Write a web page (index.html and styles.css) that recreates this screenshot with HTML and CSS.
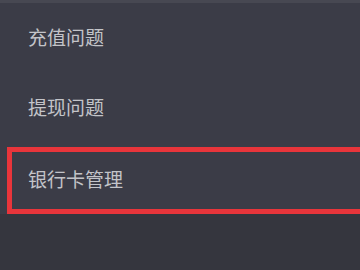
FILE: index.html
```html
<!DOCTYPE html>
<html lang="zh">
<head>
<meta charset="utf-8">
<link rel="stylesheet" href="styles.css">
</head>
<body>
<div class="topbar"></div>
<div class="list">
  <div class="row"><span class="label">充值问题</span></div>
  <div class="row"><span class="label">提现问题</span></div>
  <div class="row row-hl">
    <div class="hl"><span class="label">银行卡管理</span></div>
  </div>
</div>
</body>
</html>
```
FILE: styles.css
```css
html, body {
  margin: 0;
  padding: 0;
}
body {
  width: 360px;
  height: 270px;
  overflow: hidden;
  background: #35363e;
  font-family: "Noto Sans CJK SC", "Noto Sans", sans-serif;
}
.topbar {
  height: 3px;
  background: #474852;
}
.list {
  background: #3b3c47;
}
.row {
  box-sizing: border-box;
  height: 70px;
  display: flex;
  align-items: center;
  padding-left: 28px;
  padding-bottom: 4px;
}
.label {
  font-size: 19px;
  line-height: 1;
  color: #c3c4c9;
}
.row-hl {
  padding-left: 0;
  padding-bottom: 0;
  align-items: flex-start;
  padding-top: 4px;
  height: 71px;
}
.hl {
  box-sizing: border-box;
  height: 67px;
  margin-left: 7px;
  flex: 1;
  border: 5px solid #e8353b;
  border-right: none;
  display: flex;
  align-items: center;
  padding-left: 16px;
  padding-bottom: 4px;
}
```
